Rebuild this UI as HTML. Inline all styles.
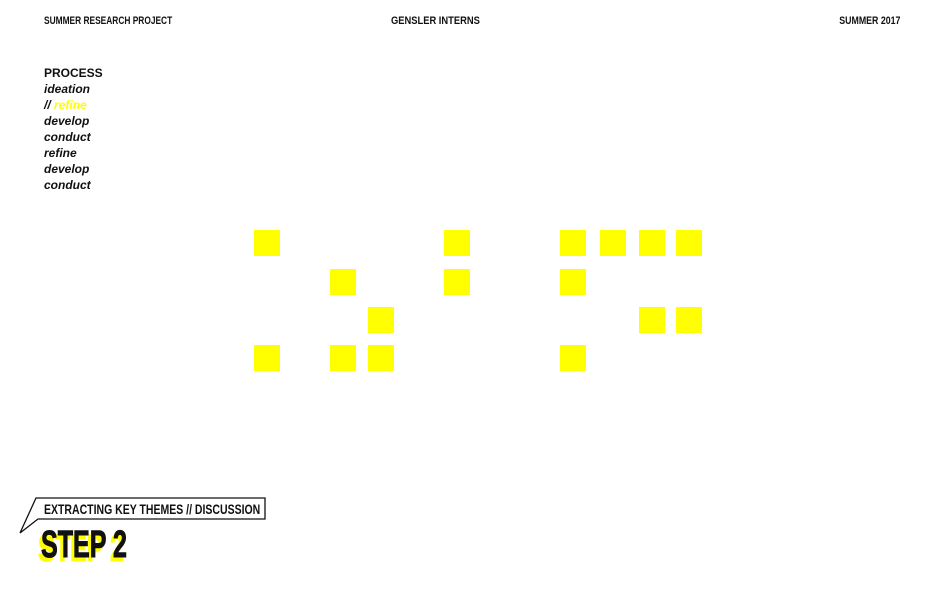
<!DOCTYPE html><html><head><style>
body{margin:0;width:943px;height:589px;background:#fff;position:relative;overflow:hidden;font-family:"Liberation Sans",sans-serif}
.h{position:absolute;top:15px;font-size:11px;font-weight:bold;color:#111;transform:scaleX(.8);white-space:nowrap}
.p{position:absolute;left:44px;top:65px;font-size:12px;font-weight:bold;font-style:italic;line-height:16px;color:#111}
.s{position:absolute;width:26px;height:26px;background:#ffff00}
.c{position:absolute;font-weight:bold;white-space:nowrap;transform-origin:left top}
</style></head><body>
<div class="h" style="left:44px;transform-origin:left;transform:scaleX(.76)">SUMMER RESEARCH PROJECT</div>
<div class="h" style="left:391px;transform-origin:left;transform:scaleX(.85)">GENSLER INTERNS</div>
<div class="h" style="right:43px;transform-origin:right">SUMMER 2017</div>
<div class="p"><span style="font-style:normal">PROCESS</span><br>ideation<br>// <span style="color:#ffff00">refine</span><br>develop<br>conduct<br>refine<br>develop<br>conduct</div>
<div class="s" style="left:254px;top:230px"></div><div class="s" style="left:444px;top:230px"></div><div class="s" style="left:560px;top:230px"></div><div class="s" style="left:600px;top:230px"></div><div class="s" style="left:639px;top:230px"></div><div class="s" style="left:676px;top:230px"></div>
<div class="s" style="left:330px;top:269px"></div><div class="s" style="left:444px;top:269px"></div><div class="s" style="left:560px;top:269px"></div>
<div class="s" style="left:368px;top:307px"></div><div class="s" style="left:639px;top:307px"></div><div class="s" style="left:676px;top:307px"></div>
<div class="s" style="left:254px;top:345px"></div><div class="s" style="left:330px;top:345px"></div><div class="s" style="left:368px;top:345px"></div><div class="s" style="left:560px;top:345px"></div>
<svg style="position:absolute;left:0;top:0" width="943" height="589"><polyline points="20,533 36,498 265,498 265,519 38,519 20,533" fill="none" stroke="#111" stroke-width="1.3"/></svg>
<div class="c" style="left:44px;top:501px;font-size:14px;transform:scaleX(.75);color:#111">EXTRACTING KEY THEMES // DISCUSSION</div>
<div class="c" style="left:38px;top:528px;font-size:38px;transform:scaleX(.66);color:#ffff00;-webkit-text-stroke:1px #ffff00">STEP 2</div>
<div class="c" style="left:41px;top:524px;font-size:38px;transform:scaleX(.66);color:#111;-webkit-text-stroke:1px #111">STEP 2</div>
</body></html>
